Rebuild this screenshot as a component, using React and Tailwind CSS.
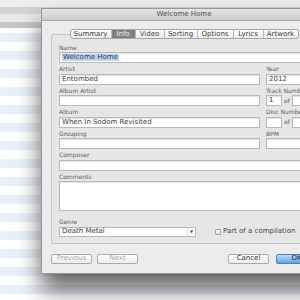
import React from "react";

const tabs = [
  { label: "Summary", w: "w-[40px]" },
  { label: "Info", w: "w-[24px]", active: true },
  { label: "Video", w: "w-[29px]" },
  { label: "Sorting", w: "w-[33px]" },
  { label: "Options", w: "w-[36px]" },
  { label: "Lyrics", w: "w-[30px]" },
  { label: "Artwork", w: "w-[35px]" },
];

const stripes = Array.from({ length: 30 }, (_, i) => i);

function Label({ children, className = "" }) {
  return (
    <div className={`flex h-[10.5px] items-end pb-[1.5px] text-[6px] leading-none text-[#5a5a5a] ${className}`}>
      {children}
    </div>
  );
}

function Field({ children, className = "" }) {
  return (
    <div
      className={`flex h-[11px] items-center border border-[#b8b8b8] bg-white px-[2px] text-[7px] leading-none text-[#3a3a3a] shadow-[inset_0_1px_0_#e4e4e4] ${className}`}
    >
      {children}
    </div>
  );
}

function Button({ children, disabled, primary, className = "" }) {
  return (
    <div
      className={`flex h-[10px] w-[41px] items-center justify-center rounded-[2px] border text-[7px] leading-none ${
        primary
          ? "border-[#4d7fc0] bg-gradient-to-b from-[#b9dafa] to-[#5ea3ea] text-[#1d1d1d]"
          : "border-[#ababab] bg-gradient-to-b from-white to-[#ededed] " +
            (disabled ? "text-[#a8a8a8]" : "text-[#333]")
      } ${className}`}
    >
      {children}
    </div>
  );
}

export default function App() {
  return (
    <div className="relative h-[300px] w-[300px] overflow-hidden bg-white font-['DejaVu_Sans','Liberation_Sans',sans-serif]">
      {/* iTunes window behind the dialog */}
      <div className="flex flex-col">
        <div className="h-[7px] bg-[#eceee9]" />
        <div className="h-[7px] bg-[#d3d3d3]" />
        <div className="h-[8px] bg-[#e9e9e9]" />
        <div className="h-[6px] bg-[#c6c6c6]" />
        <div className="h-[5px] bg-white" />
        {stripes.map((i) => (
          <div key={i} className={`h-[9px] ${i % 2 === 0 ? "bg-[#eaf0fa]" : "bg-white"}`} />
        ))}
      </div>

      {/* Get Info sheet */}
      <div className="absolute left-[41px] top-[8px] flex w-[286px] flex-col border border-[#979797] bg-[#ececec] shadow-[0_16px_22px_rgba(0,0,0,0.6)]">
        <div className="flex h-[12px] items-center justify-center border-b border-[#ababab] bg-gradient-to-b from-[#e4e4e4] to-[#cdcdcd] text-[7px] leading-none text-[#4e4e4e]">
          Welcome Home
        </div>

        <div className="flex flex-col px-[9px] pb-[9px] pt-[8px]">
          <div className="relative">
            <div className="relative z-10 flex justify-center">
              <div className="flex h-[10px] overflow-hidden rounded-[3px] border border-[#a6a6a6] bg-gradient-to-b from-white to-[#ececec]">
                {tabs.map((t, i) => (
                  <div
                    key={t.label}
                    className={`flex ${t.w} items-center justify-center text-[7px] leading-none ${
                      i > 0 ? "border-l border-[#b8b8b8]" : ""
                    } ${t.active ? "bg-[#808080] text-[#f0f0f0]" : "text-[#3a3a3a]"}`}
                  >
                    {t.label}
                  </div>
                ))}
              </div>
            </div>

            <div className="-mt-[5px] flex flex-col rounded-[2px] border border-[#c4c4c4] bg-[#e6e6e6] px-[7px] pb-[6px] pt-[6.5px]">
              <Label>Name</Label>
              <Field className="border-[#6396d3] shadow-[0_0_0_1.5px_#92b9e7]">
                <span className="bg-[#b8d5f7] px-[1px]">Welcome Home</span>
              </Field>

              <div className="flex gap-[6px]">
                <div className="flex w-[201px] flex-col">
                  <Label>Artist</Label>
                  <Field>Entombed</Field>
                  <Label>Album Artist</Label>
                  <Field />
                  <Label>Album</Label>
                  <Field>When In Sodom Revisited</Field>
                  <Label>Grouping</Label>
                  <Field />
                </div>
                <div className="flex flex-1 flex-col">
                  <Label>Year</Label>
                  <Field>2012</Field>
                  <Label>Track Number</Label>
                  <div className="flex items-center gap-[2px]">
                    <Field className="w-[16px]">1</Field>
                    <span className="text-[6px] leading-none text-[#555]">of</span>
                    <Field className="flex-1" />
                  </div>
                  <Label>Disc Number</Label>
                  <div className="flex items-center gap-[2px]">
                    <Field className="w-[16px]" />
                    <span className="text-[6px] leading-none text-[#555]">of</span>
                    <Field className="flex-1" />
                  </div>
                  <Label>BPM</Label>
                  <Field />
                </div>
              </div>

              <Label>Composer</Label>
              <Field />
              <Label>Comments</Label>
              <Field className="h-[30px]" />
              <Label className="mt-[5px]">Genre</Label>
              <div className="flex items-center">
                <div className="flex h-[10px] w-[137px] items-center justify-between border border-[#b8b8b8] bg-white pl-[2px] text-[7px] leading-none text-[#3a3a3a]">
                  <span>Death Metal</span>
                  <span className="flex h-full w-[8px] items-center justify-center border-l border-[#d4d4d4] text-[4px] text-[#444]">
                    ▼
                  </span>
                </div>
                <div className="ml-[19px] flex items-center gap-[2px]">
                  <span className="h-[6px] w-[6px] rounded-[1px] border border-[#a0a0a0] bg-gradient-to-b from-white to-[#e6e6e6]" />
                  <span className="text-[7px] leading-none text-[#444]">Part of a compilation</span>
                </div>
              </div>
            </div>
          </div>

          <div className="mt-[10px] flex items-center">
            <Button disabled>Previous</Button>
            <Button disabled className="ml-[5px]">
              Next
            </Button>
            <Button className="ml-auto">Cancel</Button>
            <Button primary className="ml-[7px]">
              OK
            </Button>
          </div>
        </div>
      </div>
    </div>
  );
}
